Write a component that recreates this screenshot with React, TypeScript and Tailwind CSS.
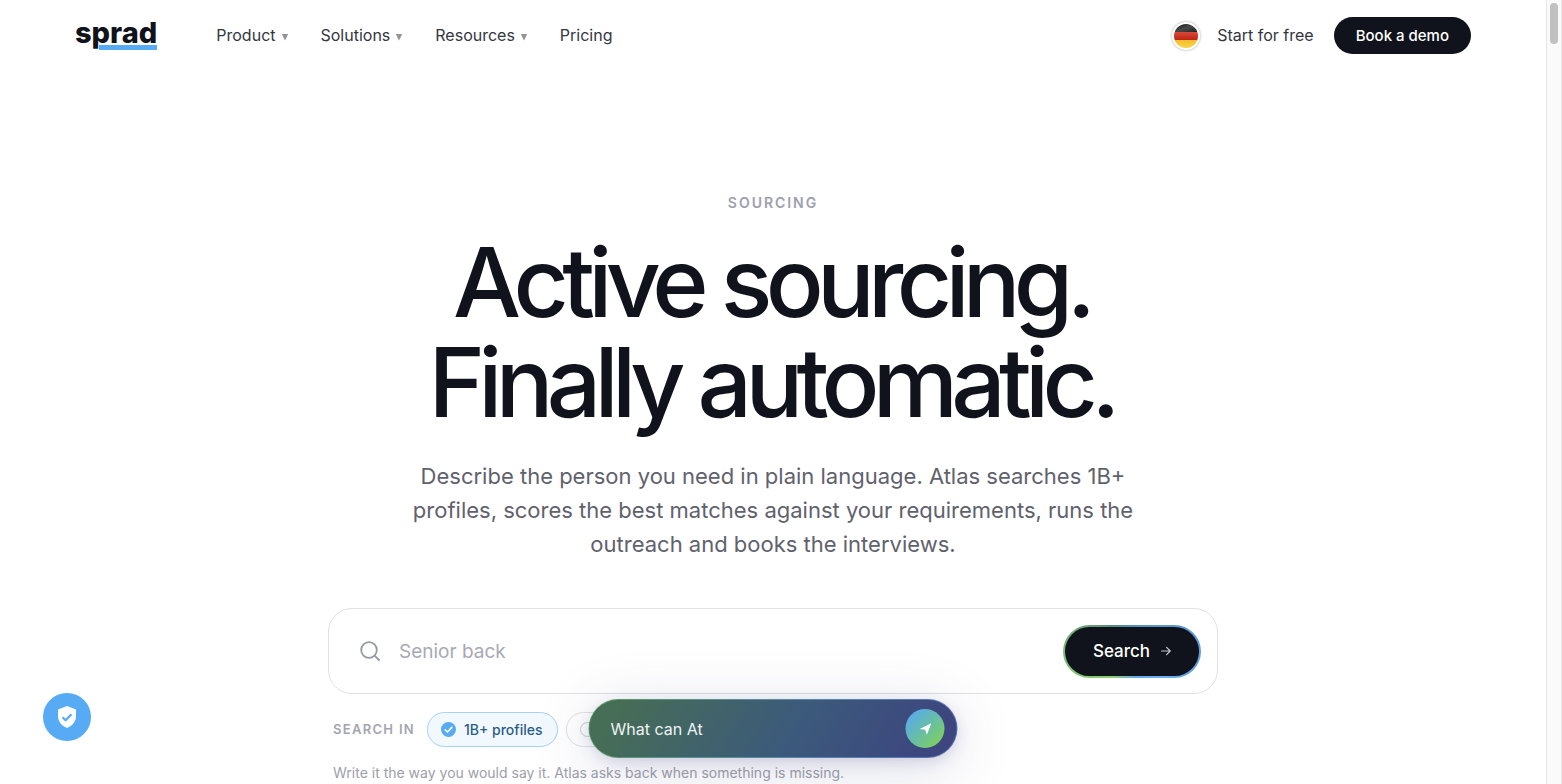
import React, { useState } from 'react';

const menuItems = [
  { label: 'Product', hasMenu: true },
  { label: 'Solutions', hasMenu: true },
  { label: 'Resources', hasMenu: true },
  { label: 'Pricing', hasMenu: false },
];

const Logo: React.FC = () => (
  <a href="#" className="relative block h-7 text-[29px] leading-[22px] font-extrabold text-[#10131b]">
    sprad
    <span className="absolute right-0 bottom-0 h-[6px] w-[58px] border-t border-white bg-[#57abf5]"></span>
  </a>
);

const GermanFlag: React.FC = () => (
  <svg className="h-6 w-6" viewBox="0 0 24 24" aria-hidden="true">
    <defs>
      <clipPath id="flag-clip"><circle cx="12" cy="12" r="12" /></clipPath>
      <linearGradient id="flag-black" x1="0" y1="0" x2="1" y2="1">
        <stop offset="0" stopColor="#111111" />
        <stop offset="0.5" stopColor="#484848" />
        <stop offset="1" stopColor="#202020" />
      </linearGradient>
      <linearGradient id="flag-red" x1="0" y1="0" x2="0" y2="1">
        <stop offset="0" stopColor="#d9483a" />
        <stop offset="1" stopColor="#bd2415" />
      </linearGradient>
      <linearGradient id="flag-gold" x1="0" y1="0" x2="0" y2="1">
        <stop offset="0" stopColor="#f3bd2c" />
        <stop offset="1" stopColor="#fad648" />
      </linearGradient>
    </defs>
    <g clipPath="url(#flag-clip)">
      <rect width="24" height="8" fill="url(#flag-black)" />
      <rect y="8" width="24" height="8" fill="url(#flag-red)" />
      <rect y="16" width="24" height="8" fill="url(#flag-gold)" />
    </g>
  </svg>
);

const Header: React.FC = () => (
  <header className="flex h-[71px] items-center justify-between px-[75px]">
    <div className="flex items-center gap-[59px]">
      <Logo />
      <nav className="flex items-center gap-8 pb-0.5 text-base leading-[22px] text-[#33363e]">
        {menuItems.map(item => item.hasMenu ? (
          <button key={item.label} type="button" className="flex items-center gap-[5px]">
            {item.label}
            <svg className="mt-1 h-2 w-2 fill-[#92949a]" viewBox="0 0 8 8" aria-hidden="true"><path d="M0.8 1h6.4L4 7.4z" /></svg>
          </button>
        ) : (
          <a key={item.label} href="#">{item.label}</a>
        ))}
      </nav>
    </div>
    <div className="flex items-center">
      <button type="button" aria-label="Deutsch" className="flex h-7 w-7 items-center justify-center rounded-full bg-white shadow-[0_0_3px_rgba(0,0,0,0.35)]">
        <GermanFlag />
      </button>
      <a href="#" className="ml-[17px] pb-0.5 text-base leading-[22px] text-[#33363e]">Start for free</a>
      <a href="#" className="ml-5 flex h-[37px] items-center rounded-full bg-[#10131b] px-[22px] text-[15px] leading-[25px] font-medium text-white">Book a demo</a>
    </div>
  </header>
);

const SearchForm: React.FC = () => {
  const [query, setQuery] = useState('');

  return (
    <form onSubmit={e => e.preventDefault()} className="flex h-[86px] items-center rounded-3xl border border-[#e0e1e4] bg-white pr-4 pl-[31px]">
      <svg className="h-5 w-5 shrink-0 text-[#9599a3]" viewBox="0 0 20 20" fill="none" stroke="currentColor" strokeWidth="1.8" strokeLinecap="round" aria-hidden="true">
        <circle cx="9" cy="9" r="7.8" />
        <path d="M14.6 14.6l4.4 4.4" />
      </svg>
      <input
        aria-label="Describe the person"
        value={query}
        onChange={e => setQuery(e.target.value)}
        placeholder="Senior back"
        className="ml-[19px] h-8 min-w-0 flex-1 text-[19px] outline-none placeholder:text-[#a7a9b4]"
      />
      <button type="submit" className="rounded-full bg-[conic-gradient(from_0deg,#5290b8,#5f9bd8_90deg,#6aaef4_130deg,#66a8e8_170deg,#8ccb74_220deg,#7fbd78_270deg,#5b8b78_320deg,#5290b8)] p-[2px]">
        <span className="flex h-[49px] items-center gap-[11px] rounded-full bg-[#10131b] px-7 text-[17px] leading-[27px] font-medium text-white">
          Search
          <svg className="h-[10px] w-[10px]" viewBox="0 0 10 10" fill="none" stroke="#c6c8cc" strokeWidth="1.2" strokeLinecap="round" strokeLinejoin="round" aria-hidden="true">
            <path d="M0.6 5h8.6M5.6 1.4L9.2 5 5.6 8.6" />
          </svg>
        </span>
      </button>
    </form>
  );
};

const SourceFilter: React.FC = () => (
  <div className="mt-[18px] flex items-center pl-[5px]">
    <span className="mr-3 text-[13px] font-semibold tracking-widest text-[#a3a6b0]">SEARCH IN</span>
    <button type="button" className="flex h-[35px] items-center gap-2 rounded-full border border-[#a5d2f4] bg-[#f2f9fe] pr-[14px] pl-[13px] text-sm font-medium text-[#2b5c87]">
      <svg className="h-[15px] w-[15px]" viewBox="0 0 15 15" aria-hidden="true">
        <circle cx="7.5" cy="7.5" r="7.5" fill="#57abf0" />
        <path d="M4.2 7.8l2.2 2.2 4.4-4.6" fill="none" stroke="#fff" strokeWidth="1.6" strokeLinecap="round" strokeLinejoin="round" />
      </svg>
      1B+ profiles
    </button>
    <button type="button" aria-label="Own talent pool" className="ml-2 flex h-[35px] w-[160px] items-center rounded-full border border-[#dfe1e5] bg-white pl-[13px]">
      <span className="h-[15px] w-[15px] rounded-full border border-[#c9ccd3]"></span>
    </button>
  </div>
);

const AtlasBar: React.FC = () => {
  const [question, setQuestion] = useState('');

  return (
    <form
      onSubmit={e => e.preventDefault()}
      className="absolute bottom-[26px] left-1/2 w-[369px] -translate-x-1/2 rounded-full bg-[linear-gradient(120deg,#5f9a63,#568fa0_45%,#5580b5_75%,#5a72b8)] p-px shadow-[0_10px_60px_rgba(60,65,130,0.18),0_4px_14px_rgba(60,65,130,0.16)]"
    >
      <div className="flex h-[57px] items-center rounded-full bg-[linear-gradient(120deg,#466d56_8%,#3c5a7b_55%,#3d467f_92%)] pr-3 pl-[21px]">
        <input
          aria-label="Ask Atlas"
          value={question}
          onChange={e => setQuestion(e.target.value)}
          placeholder="What can At"
          className="h-8 min-w-0 flex-1 text-base text-white outline-none placeholder:text-[#f0f3f5]"
        />
        <button type="submit" aria-label="Send" className="flex h-[39px] w-[39px] items-center justify-center rounded-full bg-[linear-gradient(135deg,#58abee_10%,#67bda8_50%,#7ccf63_85%)]">
          <svg className="h-3 w-3" viewBox="0 0 12 12" fill="#fff" aria-hidden="true"><path d="M11.8 0.2L7.4 11.8 5.7 6.8 0.2 6z" /></svg>
        </button>
      </div>
    </form>
  );
};

export default function App() {
  return (
    <div className="flex h-screen overflow-hidden bg-white font-['Inter',sans-serif] text-[#10131b]">
      <div className="relative min-w-0 flex-1 overflow-hidden">
        <Header />
        <main className="flex flex-col items-center pt-[122px]">
          <p className="text-sm leading-5 font-semibold tracking-[0.14em] text-[#9ca0ad]">SOURCING</p>
          <h1 className="mt-[19px] pr-1 text-center text-[96px] leading-[100px] font-medium tracking-[-0.07em]">
            Active sourcing.<br />Finally automatic.
          </h1>
          <p className="mt-[27px] max-w-[730px] text-center text-[22px] leading-[34px] text-[#5f626d]">
            Describe the person you need in plain language. Atlas searches 1B+ profiles, scores the best matches against your requirements, runs the outreach and books the interviews.
          </p>
          <div className="mt-[47px] w-full max-w-[890px]">
            <SearchForm />
            <SourceFilter />
            <p className="mt-4 pl-[5px] text-sm leading-5 text-[#9da0aa]">Write it the way you would say it. Atlas asks back when something is missing.</p>
          </div>
        </main>
        <AtlasBar />
        <button type="button" aria-label="Privacy settings" className="absolute bottom-[43px] left-[43px] flex h-12 w-12 items-center justify-center rounded-full bg-[#57abf5]">
          <svg className="h-[22px] w-5" viewBox="0 0 20 22" aria-hidden="true">
            <path d="M10 0l9 3.4v7.2c0 5-3.6 9.3-9 11.4-5.4-2.1-9-6.4-9-11.4V3.4z" fill="#fff" />
            <path d="M5.6 11.2l3 3 5.8-6" fill="none" stroke="#57abf5" strokeWidth="2.2" />
          </svg>
        </button>
      </div>
      <div className="w-4 shrink-0 border-x border-[#e6e6e6] bg-[#fafafa] px-[3px] pt-[3px]">
        <div className="h-[41px] rounded-full bg-[#c1c1c1]"></div>
      </div>
    </div>
  );
}
